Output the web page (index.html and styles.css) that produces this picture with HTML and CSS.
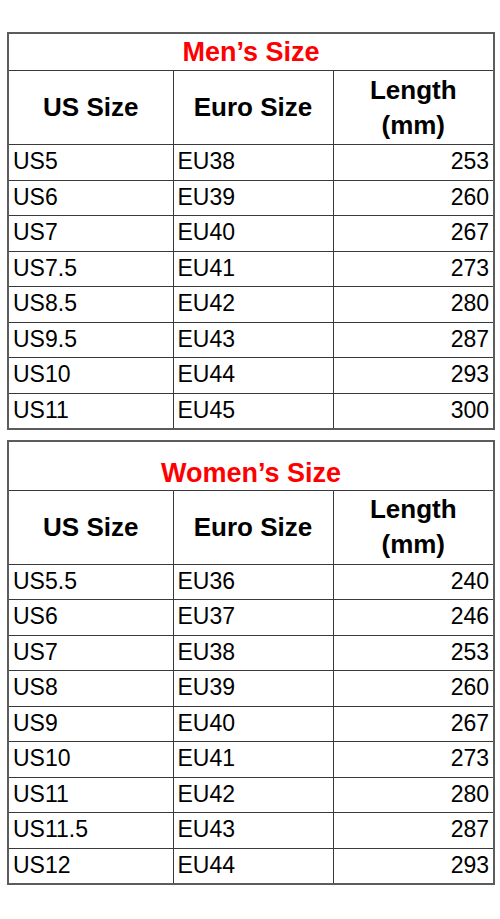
FILE: index.html
```html
<!DOCTYPE html>
<html>
<head>
<meta charset="utf-8">
<link rel="stylesheet" href="styles.css">
</head>
<body>
<div class="page">
  <table class="size-table men">
    <colgroup><col class="c1"><col class="c2"><col class="c3"></colgroup>
    <tr class="title-row"><td colspan="3" class="title">Men’s Size</td></tr>
    <tr class="head-row"><th>US Size</th><th>Euro Size</th><th>Length<br>(mm)</th></tr>
    <tr><td>US5</td><td>EU38</td><td class="num">253</td></tr>
    <tr><td>US6</td><td>EU39</td><td class="num">260</td></tr>
    <tr><td>US7</td><td>EU40</td><td class="num">267</td></tr>
    <tr><td>US7.5</td><td>EU41</td><td class="num">273</td></tr>
    <tr><td>US8.5</td><td>EU42</td><td class="num">280</td></tr>
    <tr><td>US9.5</td><td>EU43</td><td class="num">287</td></tr>
    <tr><td>US10</td><td>EU44</td><td class="num">293</td></tr>
    <tr><td>US11</td><td>EU45</td><td class="num">300</td></tr>
  </table>
  <table class="size-table women">
    <colgroup><col class="c1"><col class="c2"><col class="c3"></colgroup>
    <tr class="title-row tall"><td colspan="3" class="title">Women’s Size</td></tr>
    <tr class="head-row"><th>US Size</th><th>Euro Size</th><th>Length<br>(mm)</th></tr>
    <tr><td>US5.5</td><td>EU36</td><td class="num">240</td></tr>
    <tr><td>US6</td><td>EU37</td><td class="num">246</td></tr>
    <tr><td>US7</td><td>EU38</td><td class="num">253</td></tr>
    <tr><td>US8</td><td>EU39</td><td class="num">260</td></tr>
    <tr><td>US9</td><td>EU40</td><td class="num">267</td></tr>
    <tr><td>US10</td><td>EU41</td><td class="num">273</td></tr>
    <tr><td>US11</td><td>EU42</td><td class="num">280</td></tr>
    <tr><td>US11.5</td><td>EU43</td><td class="num">287</td></tr>
    <tr><td>US12</td><td>EU44</td><td class="num">293</td></tr>
  </table>
</div>
</body>
</html>
```
FILE: styles.css
```css
html, body {
  margin: 0;
  padding: 0;
  background: #fff;
}
.page {
  padding: 32px 0 0 7px;
  font-family: "Liberation Sans", Arial, sans-serif;
  color: #000;
}
.size-table {
  border-collapse: collapse;
  table-layout: fixed;
  width: 486px;
  border: 2px solid #5c5c5c;
}
.women {
  margin-top: 10px;
}
.c1 { width: 165px; }
.c2 { width: 160px; }
.c3 { width: 161px; }
.size-table td, .size-table th {
  border: 1px solid #3a3a3a;
  padding: 0;
}
.size-table td {
  height: 32.5px;
  font-size: 23px;
  padding: 0 4px 2px 4px;
  vertical-align: middle;
  line-height: 26px;
}
.size-table td.num {
  text-align: right;
}
.title-row td.title {
  height: 36px;
  text-align: center;
  color: #ff0000;
  font-weight: bold;
  font-size: 27px;
  padding: 0;
  border-bottom: 1px solid #3a3a3a;
}
.title-row.tall td.title {
  height: 49px;
  vertical-align: bottom;
  padding-bottom: 4px;
  box-sizing: border-box;
}
.head-row th {
  height: 73px;
  font-size: 26px;
  font-weight: bold;
  line-height: 35px;
  text-align: center;
  vertical-align: middle;
}
```
